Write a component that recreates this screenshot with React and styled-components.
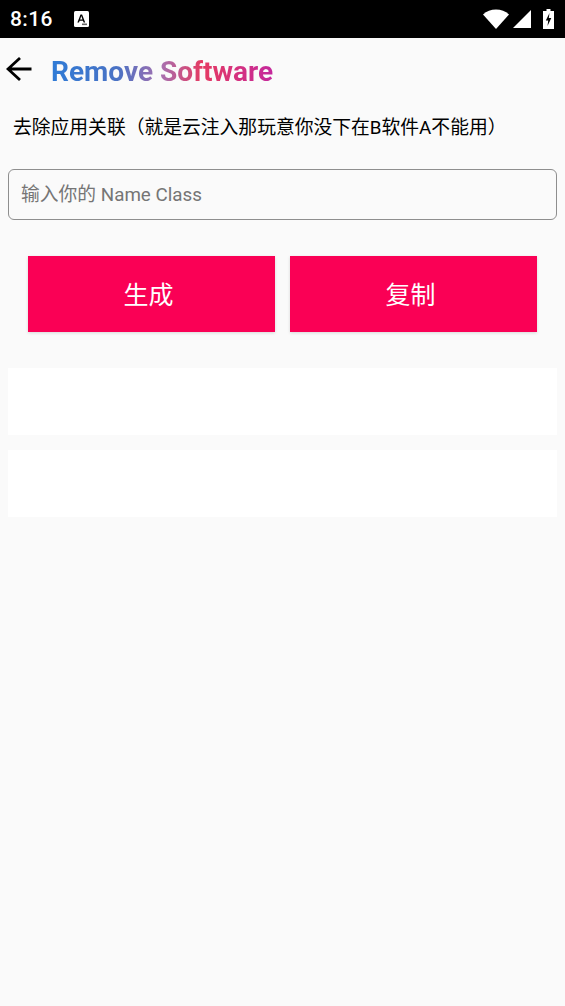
import React from 'react';
import styled, { createGlobalStyle } from 'styled-components';

const GlobalStyle = createGlobalStyle`
  html, body {
    margin: 0;
    padding: 0;
    background: #fafafa;
  }
  * {
    box-sizing: border-box;
  }
`;

const FONT = `Roboto, "Noto Sans CJK SC", sans-serif`;

const Page = styled.div`
  width: 565px;
  height: 1006px;
  background: #fafafa;
  font-family: ${FONT};
  overflow: hidden;
`;

const StatusBar = styled.div`
  height: 38px;
  background: #000;
  display: flex;
  align-items: center;
  padding: 0 11px 0 10px;
  color: #fff;
`;

const Clock = styled.div`
  font-size: 21px;
  font-weight: 500;
  letter-spacing: 0.4px;
`;

const NotifyIcon = styled.svg`
  width: 15px;
  height: 16px;
  margin-left: 21px;
`;

const StatusIcons = styled.div`
  margin-left: auto;
  display: flex;
  align-items: center;
`;

const Toolbar = styled.div`
  height: 66px;
  display: flex;
  align-items: center;
  padding-left: 6px;
`;

const BackIcon = styled.svg`
  width: 26px;
  height: 26px;
  display: block;
  margin-bottom: 4px;
`;

const Title = styled.div`
  margin: 1px 0 0 19px;
  font-size: 28px;
  font-weight: 700;
  background: linear-gradient(90deg, #2f7bd6 0%, #4a72c4 30%, #a86fae 50%, #e53a62 68%, #c4289c 100%);
  -webkit-background-clip: text;
  background-clip: text;
  color: transparent;
`;

const Description = styled.div`
  margin: 12px 0 0 13px;
  font-size: 18.8px;
  line-height: 24px;
  color: #000;
  white-space: nowrap;
`;

const NameInput = styled.input`
  display: block;
  width: 549px;
  height: 51px;
  margin: 29px 0 0 8px;
  padding: 0 12px;
  border: 1.5px solid #8e8e8e;
  border-radius: 6px;
  background: transparent;
  font-family: ${FONT};
  font-size: 18.8px;
  color: #333;
  outline: none;
  &::placeholder {
    color: #757575;
    opacity: 1;
  }
`;

const Buttons = styled.div`
  display: flex;
  gap: 15px;
  margin: 36px 0 0 28px;
`;

const ActionButton = styled.button`
  width: 247px;
  height: 76px;
  padding: 0 6px 3px 0;
  border: none;
  border-radius: 0;
  background: #fa0055;
  color: #fff;
  font-family: ${FONT};
  font-size: 25px;
  box-shadow: 0 1px 3px rgba(0, 0, 0, 0.14);
`;

const Results = styled.div`
  display: flex;
  flex-direction: column;
  gap: 15px;
  margin: 36px 8px 0;
`;

const ResultBox = styled.div`
  height: 67px;
  background: #fff;
`;

export default function App() {
  return (
    <Page>
      <GlobalStyle />
      <StatusBar>
        <Clock>8:16</Clock>
        <NotifyIcon viewBox="0 0 15 16">
          <rect width="15" height="16" rx="1.5" fill="#fff" />
          <path d="M3.4 11.500 6.500 3.500h1.600l3.100 8H9.600l-.6-1.800H5.600L5 11.500zM6.100 8.400h2.400L7.300 5z" fill="#000" />
          <rect x="8" y="12.500" width="5" height="1.600" fill="#666" />
        </NotifyIcon>
        <StatusIcons>
          <svg width="26" height="20" viewBox="0 0 26 20">
            <path d="M0 5.500C3.500 2.200 8 .5 13 .5s9.500 1.700 13 5L13 20z" fill="#fff" />
          </svg>
          <svg width="18" height="18" viewBox="0 0 18 18" style={{ marginLeft: 4 }}>
            <path d="M0 18 18 0v18z" fill="#fff" />
          </svg>
          <svg width="11" height="20" viewBox="0 0 11 20" style={{ marginLeft: 12 }}>
            <path d="M3.500 0h4v2H11v18H0V2h3.500z" fill="#fff" />
            <path d="M6.500 4 2.800 11.500h2.400L4.500 17l3.800-8H5.800z" fill="#000" />
          </svg>
        </StatusIcons>
      </StatusBar>
      <Toolbar>
        <BackIcon viewBox="0 0 26 26" fill="none" stroke="#000" strokeWidth="2.8">
          <path d="M25.500 13H2M14 2 2 13 14 24" />
        </BackIcon>
        <Title>Remove Software</Title>
      </Toolbar>
      <Description>去除应用关联（就是云注入那玩意你没下在B软件A不能用）</Description>
      <NameInput placeholder="输入你的 Name Class" />
      <Buttons>
        <ActionButton>生成</ActionButton>
        <ActionButton>复制</ActionButton>
      </Buttons>
      <Results>
        <ResultBox />
        <ResultBox />
      </Results>
    </Page>
  );
}
